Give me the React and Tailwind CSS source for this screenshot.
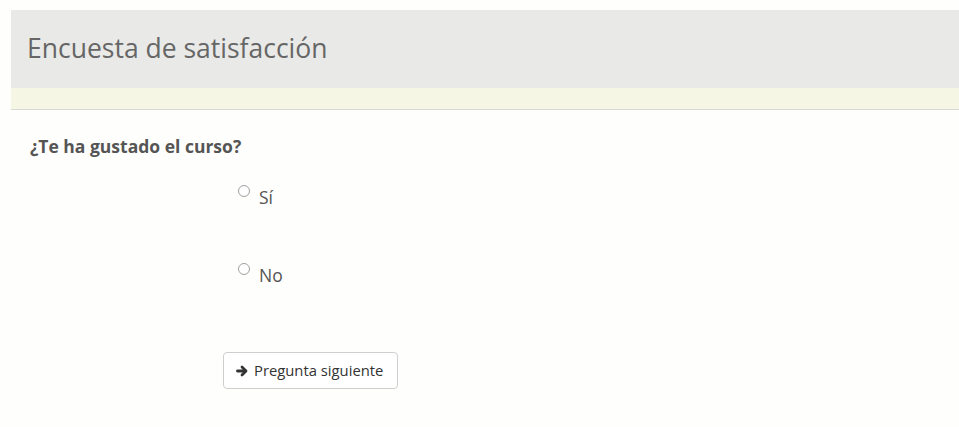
const font = { fontFamily: '"Open Sans", "Liberation Sans", sans-serif' };

function ArrowIcon() {
    return (
        <svg viewBox="0 0 12 12" className="w-[12px] h-[12px]" fill="none" stroke="currentColor" strokeWidth="2.8" strokeLinecap="round" strokeLinejoin="round">
            <path d="M1.5 6H9.5" />
            <path d="M6 2L10 6L6 10" />
        </svg>
    );
}

function Option({ label }) {
    return (
        <label className="flex items-start gap-[9px] text-[17.5px] text-[#555] leading-[22px]">
            <span className="mt-[3px] w-[12px] h-[12px] rounded-full border border-[#a0a0a0] bg-white shrink-0" />
            <span className="mt-[4px]">{label}</span>
        </label>
    );
}

export default function App() {
    return (
        <div className="w-[959px] h-[427px] bg-[#fefefc] pt-[10px] pl-[11px] overflow-hidden" style={font}>
            <div className="bg-[#e9eae8] h-[78px] flex items-center pl-[16px]">
                <h1 className="text-[26.5px] text-[#666] font-normal leading-none mt-[-2px]">Encuesta de satisfacción</h1>
            </div>
            <div className="bg-[#f5f7e4] h-[22px] border-b border-[#d8dad6]" />

            <div className="pl-[19px] pt-[25px]">
                <p className="text-[17.5px] font-bold text-[#555] leading-[22px]">¿Te ha gustado el curso?</p>
                <div className="ml-[208px] mt-[25px] flex flex-col gap-[52px]">
                    <Option label="Sí" />
                    <Option label="No" />
                </div>
                <button className="ml-[193px] mt-[66px] h-[37px] pl-[12px] pr-[14px] flex items-center gap-[6px] bg-white border border-[#cfcfcf] rounded-[4px] text-[14.8px] text-[#333]">
                    <ArrowIcon />
                    Pregunta siguiente
                </button>
            </div>
        </div>
    );
}
